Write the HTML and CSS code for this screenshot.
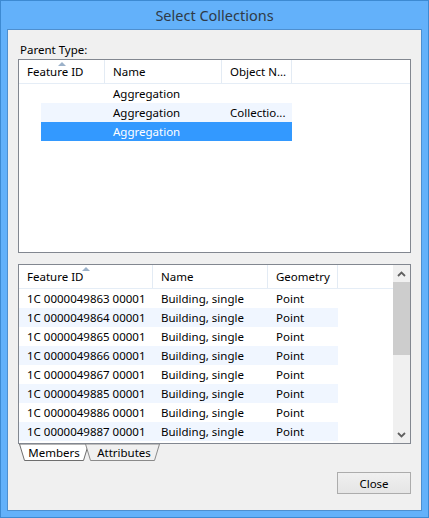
FILE: index.html
```html
<!DOCTYPE html>
<html lang="en">
  <head>
    <meta charset="UTF-8" />
    <title>Select Collections</title>
    <link rel="stylesheet" href="styles.css">
  </head>

  <body>
    <div class="window">
      <div class="titlebar">Select Collections</div>
      <div class="client">
        <div class="label">Parent Type:</div>

        <div class="listbox parent_list">
          <div class="header">
            <div class="hcell c_fid sorted">Feature ID</div>
            <div class="hcell c_name">Name</div>
            <div class="hcell c_obj">Object N...</div>
          </div>
          <div class="row">
            <div class="cell c_fid"></div>
            <div class="cell c_name">Aggregation</div>
            <div class="cell c_obj"></div>
          </div>
          <div class="row child alt">
            <div class="cell c_fid"></div>
            <div class="cell c_name">Aggregation</div>
            <div class="cell c_obj">Collectio...</div>
          </div>
          <div class="row child selected">
            <div class="cell c_fid"></div>
            <div class="cell c_name">Aggregation</div>
            <div class="cell c_obj"></div>
          </div>
        </div>

        <div class="listbox members_list">
          <div class="list_main">
            <div class="header">
              <div class="hcell m_fid sorted">Feature ID</div>
              <div class="hcell m_name">Name</div>
              <div class="hcell m_geo">Geometry</div>
            </div>
            <div id="member_rows"></div>
          </div>
          <div class="scrollbar">
            <div class="sb_btn">
              <svg width="9" height="6" viewBox="0 0 9 6"><polyline points="1,5 4.5,1.5 8,5" fill="none" stroke="#606060" stroke-width="1.8"/></svg>
            </div>
            <div class="sb_thumb"></div>
            <div class="sb_track"></div>
            <div class="sb_btn">
              <svg width="9" height="6" viewBox="0 0 9 6"><polyline points="1,1 4.5,4.5 8,1" fill="none" stroke="#606060" stroke-width="1.8"/></svg>
            </div>
          </div>
        </div>

        <div class="tabs">
          <div class="tab tab_attr">
            <svg class="tab_shape" width="75" height="17" viewBox="0 0 75 17"><polygon points="0.5,0 5.5,16.5 69.5,16.5 74.5,0" fill="#f0f0f0" stroke="#8a8a8a"/></svg>
            <span>Attributes</span>
          </div>
          <div class="tab tab_members active">
            <svg class="tab_shape" width="70" height="17" viewBox="0 0 70 17"><polygon points="0.5,0 5.5,16.5 64.5,16.5 69.5,0" fill="#ffffff" stroke="#6e6e6e"/></svg>
            <span>Members</span>
          </div>
        </div>

        <div class="footer">
          <button class="btn">Close</button>
        </div>
      </div>
    </div>

    <script>
      var members = [
        "49863", "49864", "49865", "49866",
        "49867", "49885", "49886", "49887"
      ];
      var memberRows = document.getElementById("member_rows");
      members.forEach((id, i) => {
        memberRows.innerHTML += `
          <div class="row ${i % 2 ? "alt" : ""}">
            <div class="cell m_fid">1C 00000${id} 00001</div>
            <div class="cell m_name">Building, single</div>
            <div class="cell m_geo">Point</div>
          </div>`;
      });
    </script>
  </body>
</html>
```

FILE: styles.css
```css
html,
body {
  margin: 0;
  padding: 0;
  background-color: #62b0f8;
}

body {
  font-family: "Noto Sans", "Open Sans", sans-serif;
  font-size: 11.5px;
  color: #000;
}

.window {
  width: 429px;
  height: 518px;
  box-sizing: border-box;
  border: 1px solid #3d8ad2;
  background-color: #63b1fa;
  padding: 0 6px 6px;
  display: flex;
  flex-direction: column;
}

.titlebar {
  height: 28px;
  line-height: 29px;
  text-align: center;
  font-size: 14.5px;
  color: #2f3a46;
}

.client {
  flex: 1;
  border: 1px solid #4e8fcf;
  background-color: #f0f0f0;
  padding: 12px 10px 0 10px;
  display: flex;
  flex-direction: column;
}

.label {
  height: 16px;
  line-height: 16px;
  padding-left: 2px;
  margin-bottom: 1px;
}

.listbox {
  border: 1px solid #828790;
  background-color: #fff;
  box-shadow: inset 0 0 0 1px #fff;
}

.parent_list {
  height: 192px;
}

.members_list {
  height: 178px;
  margin-top: 11px;
  display: flex;
  overflow: hidden;
}

.list_main {
  flex: 1;
  overflow: hidden;
}

.header {
  display: flex;
  height: 23px;
  border-bottom: 1px solid #e5edf6;
}

.hcell {
  position: relative;
  box-sizing: border-box;
  line-height: 23px;
  padding-left: 8px;
  border-right: 1px solid #e3ebf4;
  white-space: nowrap;
}

.sorted::before {
  content: "";
  position: absolute;
  top: 2px;
  left: calc(50% - 4px);
  border-left: 4px solid transparent;
  border-right: 4px solid transparent;
  border-bottom: 4px solid #9bb1c9;
}

.row {
  display: flex;
  height: 19px;
}

.cell {
  box-sizing: border-box;
  line-height: 19px;
  padding-left: 8px;
  white-space: nowrap;
  overflow: hidden;
}

.row.alt .cell {
  background-color: #f0f6ff;
}

.row.selected .cell {
  background-color: #3399ff;
  color: #fff;
}

.c_fid {
  width: 86px;
}

.c_name {
  width: 117px;
}

.c_obj {
  width: 70px;
}

.child .c_fid {
  width: 64px;
  margin-left: 22px;
}

.m_fid {
  width: 134px;
}

.m_name {
  width: 115px;
}

.m_geo {
  width: 70px;
}

.scrollbar {
  width: 17px;
  background-color: #f0f0f0;
  display: flex;
  flex-direction: column;
}

.sb_btn {
  height: 17px;
  display: flex;
  align-items: center;
  justify-content: center;
}

.sb_thumb {
  height: 73px;
  background-color: #cdcdcd;
}

.sb_track {
  flex: 1;
}

.tabs {
  display: flex;
  height: 17px;
  padding-left: 1px;
}

.tab {
  position: relative;
  height: 17px;
  display: flex;
  justify-content: center;
  line-height: 18px;
}

.tab span {
  position: relative;
}

.tab_shape {
  position: absolute;
  top: 0;
  left: 0;
}

.tab_members {
  order: 1;
  width: 70px;
}

.tab_attr {
  order: 2;
  width: 75px;
  margin-left: -4px;
  padding-left: 3px;
  box-sizing: border-box;
}

.footer {
  display: flex;
  justify-content: flex-end;
  margin-top: 11px;
}

.btn {
  width: 74px;
  height: 22px;
  border: 1px solid #acacac;
  background: linear-gradient(#f0f0f0, #e5e5e5);
  font-family: "Noto Sans", "Open Sans", sans-serif;
  font-size: 11.5px;
  color: #000;
  padding: 0;
}
```
